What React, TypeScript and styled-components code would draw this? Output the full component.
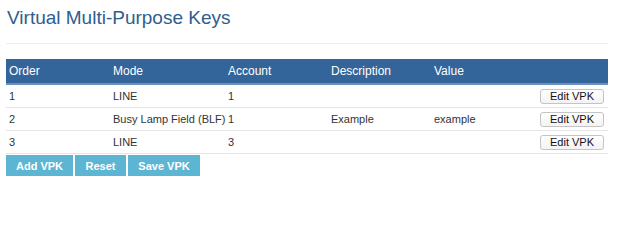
import React from "react";
import styled, { createGlobalStyle } from "styled-components";

const Global = createGlobalStyle`
  html, body { margin: 0; padding: 0; background: #fff; }
  body { font-family: "Liberation Sans", Arial, Helvetica, sans-serif; }
`;

const Page = styled.div`
  padding: 0 6px;
  width: 602px;
`;

const Title = styled.h1`
  margin: 0;
  padding: 5px 0 0 1px;
  font-size: 19px;
  font-weight: normal;
  line-height: 26px;
  color: #2f5e8e;
`;

const Rule = styled.hr`
  margin: 12px 0 15px 0;
  border: 0;
  border-top: 1px solid #eeeeee;
  height: 0;
`;

const Table = styled.table`
  width: 602px;
  border-collapse: collapse;
  table-layout: fixed;
  font-size: 11px;
  color: #333;
`;

const HeadCell = styled.th<{ $w: number }>`
  width: ${(p) => p.$w}px;
  background: #34659a;
  color: #fff;
  font-weight: normal;
  font-size: 12px;
  text-align: left;
  height: 25px;
  padding: 0 0 0 3px;
  box-sizing: border-box;
  border-bottom: 2px solid #6a92bd;
  vertical-align: middle;
`;

const Row = styled.tr`
  border-bottom: 1px solid #e6e6e6;
`;

const Cell = styled.td<{ $right?: boolean }>`
  height: 22px;
  padding: 0 ${(p) => (p.$right ? "4px" : "0")} 0 3px;
  text-align: ${(p) => (p.$right ? "right" : "left")};
  vertical-align: middle;
  white-space: nowrap;
  overflow: visible;
`;

const EditButton = styled.button`
  width: 64px;
  height: 15px;
  padding: 0;
  font-family: "Liberation Sans", Arial, sans-serif;
  font-size: 11px;
  line-height: 13px;
  color: #111;
  background: linear-gradient(#ffffff, #f3f3f3);
  border: 1px solid #c4c4c4;
  border-radius: 3px;
  vertical-align: middle;
`;

const Actions = styled.div`
  display: flex;
  gap: 2px;
  margin-top: 1px;
`;

const ActionButton = styled.button<{ $w: number }>`
  width: ${(p) => p.$w}px;
  height: 21px;
  padding: 0;
  border: 0;
  background: #5cb5d2;
  color: #fff;
  font-family: "Liberation Sans", Arial, sans-serif;
  font-size: 11px;
  font-weight: bold;
`;

const cols = [
  { name: "Order", w: 104 },
  { name: "Mode", w: 115 },
  { name: "Account", w: 103 },
  { name: "Description", w: 103 },
  { name: "Value", w: 100 },
  { name: "", w: 77 },
];

const rows = [
  { order: "1", mode: "LINE", account: "1", description: "", value: "" },
  { order: "2", mode: "Busy Lamp Field (BLF)", account: "1", description: "Example", value: "example" },
  { order: "3", mode: "LINE", account: "3", description: "", value: "" },
];

export default function App() {
  return (
    <Page>
      <Global />
      <Title>Virtual Multi-Purpose Keys</Title>
      <Rule />
      <Table>
        <thead>
          <tr>
            {cols.map((c, i) => (
              <HeadCell key={i} $w={c.w}>
                {c.name}
              </HeadCell>
            ))}
          </tr>
        </thead>
        <tbody>
          {rows.map((r) => (
            <Row key={r.order}>
              <Cell>{r.order}</Cell>
              <Cell>{r.mode}</Cell>
              <Cell>{r.account}</Cell>
              <Cell>{r.description}</Cell>
              <Cell>{r.value}</Cell>
              <Cell $right>
                <EditButton>Edit VPK</EditButton>
              </Cell>
            </Row>
          ))}
        </tbody>
      </Table>
      <Actions>
        <ActionButton $w={67}>Add VPK</ActionButton>
        <ActionButton $w={51}>Reset</ActionButton>
        <ActionButton $w={72}>Save VPK</ActionButton>
      </Actions>
    </Page>
  );
}
